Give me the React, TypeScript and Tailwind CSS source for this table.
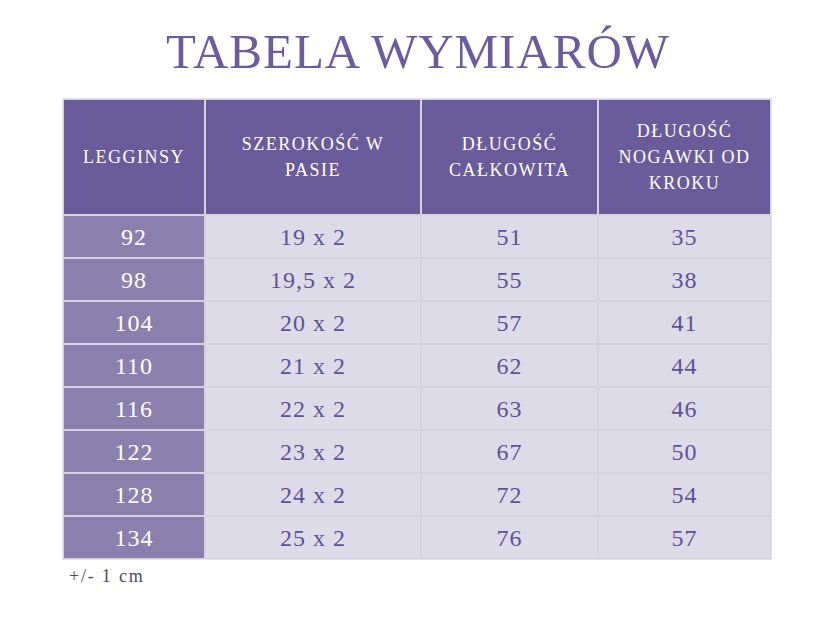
const font = { fontFamily: '"Liberation Serif", "Times New Roman", serif' }

const headers = ['LEGGINSY', 'SZEROKOŚĆ W PASIE', 'DŁUGOŚĆ CAŁKOWITA', 'DŁUGOŚĆ NOGAWKI OD KROKU']

const rows = [
  ['92', '19 x 2', '51', '35'],
  ['98', '19,5 x 2', '55', '38'],
  ['104', '20 x 2', '57', '41'],
  ['110', '21 x 2', '62', '44'],
  ['116', '22 x 2', '63', '46'],
  ['122', '23 x 2', '67', '50'],
  ['128', '24 x 2', '72', '54'],
  ['134', '25 x 2', '76', '57'],
]

const headerWidths = ['max-w-[130px]', 'max-w-[180px]', 'max-w-[150px]', 'max-w-[160px]']

export default function App() {
  return (
    <div className="w-[820px] h-[619px] bg-white" style={font}>
      <h1 className="pt-[24px] pl-[16px] text-center text-[49px] leading-[56px] text-[#6a5c9e] tracking-[1px]">
        TABELA WYMIARÓW
      </h1>

      <div className="mt-[18px] ml-[62px] w-[710px] border border-[#e4e2ea] bg-[#f6f5f8] p-px">
        <div className="grid grid-cols-[140px_214px_175px_171px] gap-[2px] bg-white">
          {headers.map((h, i) => (
            <div
              key={h}
              className="h-[114px] outline outline-1 outline-[#d6d3e0] bg-[#6a5b9a] flex items-center justify-center"
            >
              <span
                className={`text-center text-white text-[18px] leading-[26px] tracking-[1.5px] ${headerWidths[i]}`}
              >
                {h}
              </span>
            </div>
          ))}
          {rows.map((r) =>
            r.map((c, i) => (
              <div
                key={r[0] + '-' + i}
                className={`h-[41px] outline outline-1 outline-[#d6d3e0] flex items-center justify-center text-[24px] tracking-[1px] ${
                  i === 0 ? 'bg-[#8a80ae] text-white' : 'bg-[#dddbe7] text-[#5f5199]'
                }`}
              >
                {c}
              </div>
            ))
          )}
        </div>
      </div>

      <p className="ml-[69px] mt-[3px] text-[18px] tracking-[1.8px] text-[#4d4a6b]">+/- 1 cm</p>
    </div>
  )
}
